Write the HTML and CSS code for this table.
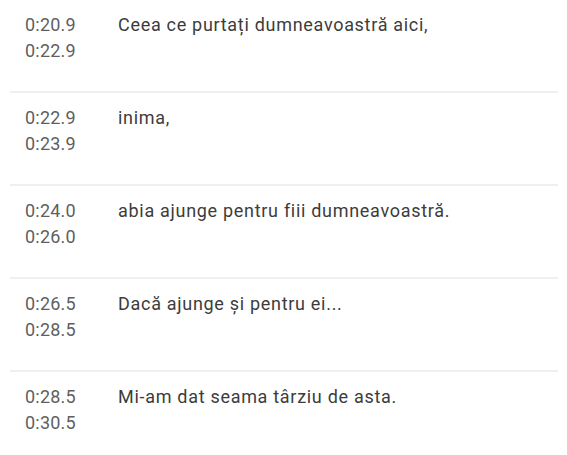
FILE: index.html
```html
<!DOCTYPE html>
<html lang="ro">
<head>
<meta charset="utf-8">
<link rel="stylesheet" href="styles.css">
</head>
<body>
<div class="cues">
  <div class="cue">
    <div class="time"><div>0:20.9</div><div>0:22.9</div></div>
    <div class="text">Ceea ce purtați dumneavoastră aici,</div>
  </div>
  <div class="cue">
    <div class="time"><div>0:22.9</div><div>0:23.9</div></div>
    <div class="text">inima,</div>
  </div>
  <div class="cue">
    <div class="time"><div>0:24.0</div><div>0:26.0</div></div>
    <div class="text">abia ajunge pentru fiii dumneavoastră.</div>
  </div>
  <div class="cue">
    <div class="time"><div>0:26.5</div><div>0:28.5</div></div>
    <div class="text">Dacă ajunge și pentru ei...</div>
  </div>
  <div class="cue">
    <div class="time"><div>0:28.5</div><div>0:30.5</div></div>
    <div class="text">Mi-am dat seama târziu de asta.</div>
  </div>
</div>
</body>
</html>
```
FILE: styles.css
```css
html, body {
  margin: 0;
  padding: 0;
  background: #ffffff;
}
body {
  font-family: Roboto, "Noto Sans", sans-serif;
  font-size: 18px;
  line-height: 26px;
}
.cues {
  padding: 0 9px 0 10px;
}
.cue {
  display: flex;
  padding: 12px 0 27px;
  border-bottom: 2px solid #efefef;
}
.cue:last-child {
  border-bottom: none;
}
.time {
  width: 108px;
  padding-left: 15px;
  box-sizing: border-box;
  color: #5f5f5f;
  letter-spacing: 0.2px;
  flex: none;
}
.text {
  color: #3c3c3c;
  letter-spacing: 0.7px;
}
```
